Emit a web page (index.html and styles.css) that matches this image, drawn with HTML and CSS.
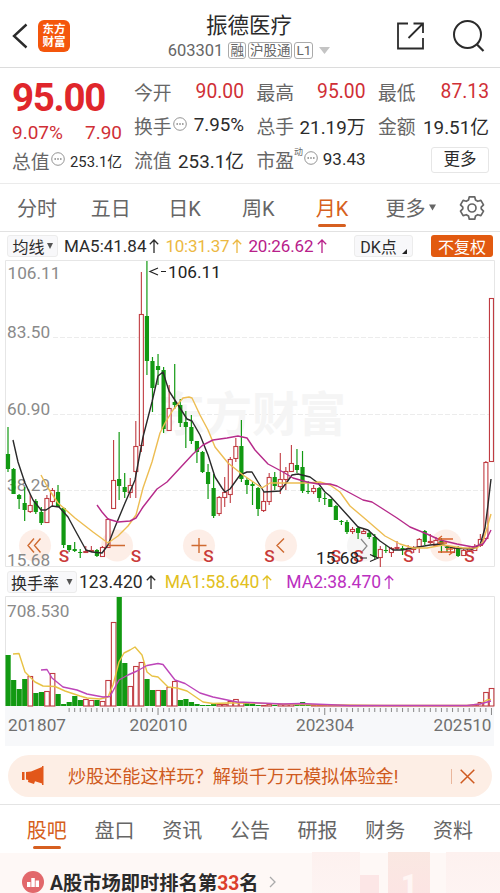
FILE: index.html
```html
<!DOCTYPE html>
<html lang="zh-CN">
<head>
    <meta charset="UTF-8">
    <title>振德医疗 603301</title>
    <link rel="stylesheet" href="styles.css">
</head>
<body>
    <svg class="defs" width="0" height="0">
        <symbol id="up" viewBox="0 0 10 14"><path d="M5 14V1M.8 5.200L5 1l4.200 4.200" fill="none" stroke="currentColor" stroke-width="1.3"/></symbol>
        <symbol id="info" viewBox="0 0 14 14"><circle cx="7" cy="7" r="6.3" fill="none" stroke="#888" stroke-width=".9"/><path d="M3.5 7h1.4M6.3 7h1.4M9.1 7h1.4" stroke="#777" stroke-width="1.3"/></symbol>
    </svg>

    <header class="header">
        <svg class="back" width="16" height="26" viewBox="0 0 16 26"><path d="M14.5 1.5L2 13l12.5 11.5" fill="none" stroke="#2b2b2b" stroke-width="2.4"/></svg>
        <div class="logo"><span>东方</span><span>财富</span></div>
        <div class="title">
            <h1>振德医疗</h1>
            <div class="code">603301<i>融</i><i>沪股通</i><i>L1</i><svg width="11" height="7" viewBox="0 0 11 7"><path d="M0 0h11L5.5 7z" fill="#c4c4c4"/></svg></div>
        </div>
        <svg class="share" width="30" height="30" viewBox="0 0 30 30"><path d="M12 2.5H2v25h25V17M17.500 2.500H27v9.500M27 2.500L12.500 17" fill="none" stroke="#2b2b2b" stroke-width="1.8"/></svg>
        <svg class="search" width="34" height="34" viewBox="0 0 34 34"><circle cx="15.500" cy="15.500" r="13.500" fill="none" stroke="#2b2b2b" stroke-width="2"/><path d="M25 25.500l6.500 6.500" stroke="#2b2b2b" stroke-width="2.200"/></svg>
    </header>

    <section class="quote">
        <div class="price">
            <div class="now">95.00</div>
            <div class="change"><span>9.07%</span><span>7.90</span></div>
            <div class="cell small"><label>总值</label><svg class="info"><use href="#info"/></svg><b>253.1亿</b></div>
        </div>
        <div class="stats">
            <div class="cell"><label>今开</label><b class="red">90.00</b></div>
            <div class="cell"><label>最高</label><b class="red">95.00</b></div>
            <div class="cell"><label>最低</label><b class="red">87.13</b></div>
            <div class="cell"><label>换手</label><svg class="info"><use href="#info"/></svg><b>7.95%</b></div>
            <div class="cell"><label>总手</label><b>21.19万</b></div>
            <div class="cell"><label>金额</label><b>19.51亿</b></div>
            <div class="cell"><label>流值</label><b>253.1亿</b></div>
            <div class="cell pe"><label>市盈<sup>动</sup></label><svg class="info"><use href="#info"/></svg><b>93.43</b></div>
            <div class="more">更多</div>
        </div>
    </section>

    <nav class="periods">
        <span>分时</span><span>五日</span><span>日K</span><span>周K</span><span class="active">月K</span>
        <span class="wide">更多<svg width="7" height="7" viewBox="0 0 7 7"><path d="M0 .5h7L3.500 6.500z" fill="#666"/></svg></span>
        <svg class="gear" width="26" height="26" viewBox="0 0 26 26" fill="none" stroke="#666" stroke-width="1.700" stroke-linejoin="round"><path d="M10.300 1.800h5.400l.8 3.200 2.200 1.300 3.200-.9 2.600 4.500-2.300 2.300v1.600l2.300 2.300-2.600 4.500-3.200-.9-2.200 1.300-.8 3.200h-5.400L9.500 21l-2.200-1.300-3.200.9-2.600-4.500 2.300-2.300v-1.600L1.500 9.900l2.600-4.500 3.200.9L9.500 5z"/><circle cx="13" cy="13" r="4"/></svg>
    </nav>

    <div class="legend">
        <span class="chip">均线<svg width="6" height="6" viewBox="0 0 7 7"><path d="M0 0h7L3.500 7z" fill="#555"/></svg></span>
        <span class="ma">MA5:41.84<svg class="up"><use href="#up"/></svg></span>
        <span class="ma yellow">10:31.37<svg class="up"><use href="#up"/></svg></span>
        <span class="ma magenta">20:26.62<svg class="up"><use href="#up"/></svg></span>
        <span class="chip dk">DK点<svg width="5" height="5" viewBox="0 0 5 5"><path d="M5 0v5H0z" fill="#222"/></svg></span>
        <span class="chip fq">不复权</span>
    </div>

    <svg class="kline" id="kline" width="500" height="307" viewBox="0 260 500 307"></svg>

    <div class="legend turnover">
        <span class="chip">换手率<svg width="7" height="6" viewBox="0 0 7 7"><path d="M0 0h7L3.500 7z" fill="#555"/></svg></span>
        <span class="ma">123.420<svg class="up"><use href="#up"/></svg></span>
        <span class="ma gold">MA1:58.640<svg class="up"><use href="#up"/></svg></span>
        <span class="ma purple">MA2:38.470<svg class="up"><use href="#up"/></svg></span>
    </div>

    <svg class="volume" id="volume" width="500" height="150" viewBox="0 596 500 150"></svg>

    <div class="banner">
        <svg width="22" height="20" viewBox="0 0 22 20" fill="#e2571a"><path d="M0 6h2.500v8H0zM4 6l5-.5L20 1V0h1.500v19H20v-1.500l-7-2.300L12 18l-6-2 .3-2L4 13.500z"/></svg>
        <p>炒股还能这样玩？解锁千万元模拟体验金!</p>
        <svg class="close" width="15" height="15" viewBox="0 0 15 15"><path d="M.7.700l13.600 13.600M14.300.700L.7 14.300" stroke="#cf5a20" stroke-width="1.500"/></svg>
    </div>

    <nav class="sections">
        <span class="active">股吧</span><span>盘口</span><span>资讯</span><span>公告</span><span>研报</span><span>财务</span><span>资料</span>
    </nav>

    <div class="rank">
        <svg width="22" height="22" viewBox="0 0 22 22"><circle cx="11" cy="11" r="11" fill="#e2686b"/><path d="M5 16v-5h3.500v5zM9.300 16V7h3.500v9zM13.600 16V9.500H17V16z" fill="#fff"/></svg>
        <p>A股市场即时排名第<em>33</em>名</p>
        <svg class="arrow" width="7" height="12" viewBox="0 0 7 12"><path d="M1 1l5 5-5 5" fill="none" stroke="#aaa" stroke-width="1.300"/></svg>
        <div class="podium"><i></i><i></i><i>1</i><i></i></div>
    </div>

    <script src="chart.js"></script>
</body>
</html>
```

FILE: styles.css
```css
* {
    box-sizing: border-box;
}

body {
    margin: 0;
    width: 500px;
    height: 893px;
    overflow: hidden;
    background: #fff;
    color: #2b2b2b;
    font-family: Roboto, "Noto Sans CJK SC", sans-serif;
}

svg {
    display: block;
    flex: none;
}

.defs {
    position: absolute;
}

h1, p {
    margin: 0;
}

i, em {
    font-style: normal;
}

/* header */
.header {
    display: flex;
    align-items: center;
    height: 68px;
    padding: 5px 14px 0 12px;
    border-bottom: 1px solid #dcdcdc;
}

.logo {
    display: flex;
    flex-direction: column;
    justify-content: center;
    width: 32px;
    height: 32px;
    margin-left: 10px;
    border-radius: 6px;
    background: #f4560c;
    color: #fff;
    font-size: 11.5px;
    font-weight: 700;
    line-height: 13px;
    text-align: center;
}

.title {
    width: 180px;
    margin: 0 auto 0 89px;
    text-align: center;
}

.title h1 {
    font-size: 21.5px;
    font-weight: 400;
    line-height: 29px;
}

.code {
    display: flex;
    align-items: center;
    justify-content: center;
    height: 22px;
    gap: 2px;
    color: #666;
    font-size: 16.5px;
    white-space: nowrap;
}

.code i {
    border: 1px solid #aaa;
    border-radius: 3px;
    padding: 0 1px;
    font-size: 13.5px;
    line-height: 15px;
}

.code i:first-of-type {
    margin-left: 3px;
}

.code svg {
    margin-left: 4px;
}

.share {
    margin-right: 26px;
}

/* quote */
.quote {
    display: flex;
    height: 116px;
    padding: 7px 11px 0 12px;
    border-bottom: 1px solid #ebebeb;
}

.price {
    width: 110px;
    margin-right: 12px;
}

.now {
    height: 46px;
    color: #e0262b;
    font-size: 38.5px;
    font-weight: 700;
    line-height: 46px;
    letter-spacing: -1.3px;
}

.change {
    display: flex;
    justify-content: space-between;
    height: 22px;
    color: #d02f36;
    font-size: 19px;
    line-height: 23px;
}

.cell {
    display: flex;
    align-items: center;
    height: 34px;
}

.cell label {
    color: #666;
    font-size: 18.8px;
    white-space: nowrap;
}

.cell b {
    margin-left: auto;
    font-size: 18.8px;
    font-weight: 400;
    white-space: nowrap;
}

.cell .red {
    color: #d02f36;
    font-size: 19.3px;
}

.cell.small b {
    font-size: 14.8px;
}

.info {
    width: 14px;
    height: 14px;
    margin: -3px 0 0 1px;
}

.stats {
    flex: 1;
    display: grid;
    grid-template-columns: 110px 109px 111px;
    grid-auto-rows: 34px;
    column-gap: 12.5px;
}

.stats .cell {
    position: relative;
    top: -1px;
}

.pe sup {
    font-size: 9px;
    vertical-align: 13px;
    line-height: 0;
}

.pe b {
    font-size: 17px;
}

.more {
    align-self: center;
    justify-self: end;
    width: 58px;
    height: 26px;
    border: 1px solid #e6e6e6;
    border-radius: 3px;
    font-size: 16.5px;
    line-height: 23px;
    text-align: center;
}

/* period tabs */
.periods {
    display: flex;
    height: 48px;
    padding-right: 1px;
    border-bottom: 1px solid #e2e2e2;
    color: #666;
    font-size: 20px;
}

.periods span {
    display: flex;
    align-items: center;
    justify-content: center;
    width: 73.8px;
}

.periods .wide {
    width: 84px;
    gap: 4px;
}

.periods .active, .sections .active {
    position: relative;
    color: #d65f20;
}

.periods .active::after, .sections .active::after {
    content: "";
    position: absolute;
    left: 50%;
    bottom: 4px;
    width: 28px;
    height: 3px;
    margin-left: -14px;
    border-radius: 2px;
    background: #d65f20;
}

.gear {
    margin: 11px 0 0 6px;
}

/* indicator rows */
.legend {
    display: flex;
    align-items: center;
    height: 28px;
    padding: 0 7px;
    font-size: 17px;
    white-space: nowrap;
}

.chip {
    display: flex;
    align-items: center;
    justify-content: center;
    gap: 2px;
    width: 51px;
    height: 22px;
    border: 1px solid #ececec;
    border-radius: 3px;
    background: #f8f8fa;
    font-size: 16px;
}

.ma {
    display: flex;
    align-items: center;
    gap: 3px;
    margin-left: 6px;
}

.up {
    width: 10px;
    height: 14px;
}

.yellow { color: #ecb842; letter-spacing: -0.25px; }
.magenta { color: #b8208a; letter-spacing: -0.1px; }
.gold { color: #e2c020; }
.purple { color: #bb30c0; }

.dk {
    width: 59px;
    margin-left: auto;
    gap: 5px;
}

.dk svg {
    margin-top: 10px;
}

.fq {
    width: 62px;
    margin-left: 18px;
    border: none;
    background: #e25a10;
    color: #fff;
}

.turnover {
    height: 29px;
    font-size: 17.5px;
}

.turnover .chip {
    width: 70px;
    gap: 7px;
}

.turnover .ma {
    margin-left: 12px;
}

.turnover .chip + .ma {
    margin-left: 2px;
    margin-right: -3px;
}

.turnover .purple {
    margin-left: 14px;
}

/* charts */
.kline text, .volume text {
    font-size: 17.2px;
}

.kline .watermark {
    font-size: 47px;
    font-weight: 700;
    fill: #f5f5f5;
}

.label { fill: #8a8a8a; }
.date { fill: #707070; }
.mark { fill: #c93a3a; font-weight: 500; }
.extreme { fill: #222; }

/* banner */
.banner {
    display: flex;
    align-items: center;
    height: 42px;
    margin: 9px 8px 7px;
    padding: 0 17px 0 14px;
    border-radius: 21px;
    background: #fdeee5;
    color: #cf5a20;
    font-size: 18.1px;
}

.banner p {
    margin: -2px auto 0 24px;
    white-space: nowrap;
}

.close {
    box-sizing: content-box;
    padding-left: 8px;
    border-left: 1px solid #e9b69c;
}

/* bottom tabs */
.sections {
    display: flex;
    height: 49px;
    padding: 0 13px;
    border-top: 1px solid #e4e4e4;
    color: #666;
    font-size: 20px;
}

.sections span {
    display: flex;
    align-items: center;
    justify-content: center;
    width: 67.7px;
    padding-top: 1px;
}

.rank {
    display: flex;
    align-items: center;
    height: 60px;
    padding: 0 0 2px 22px;
    background: #fef8f6;
}

.rank p {
    margin-left: 6px;
    font-size: 19.3px;
    font-weight: 700;
    white-space: nowrap;
}

.rank em {
    color: #dc3f2c;
}

.arrow {
    margin-left: 10px;
}

.podium {
    display: flex;
    align-items: flex-end;
    height: 60px;
    margin-left: auto;
}

.podium i {
    width: 48px;
    height: 60px;
    background: linear-gradient(#fdf1ef, #fef5f4);
}

.podium i:nth-child(2) {
    width: 19px;
    height: 37px;
    margin-right: 9px;
    background: #fce6e6;
}

.podium i:nth-child(3) {
    width: 42px;
    margin-right: 16px;
    background: linear-gradient(#fae8e2, #fde3e4);
    color: #fff6f4;
    font-size: 28px;
    font-weight: 900;
    line-height: 66px;
    text-align: center;
}

.podium i:nth-child(4) {
    width: 54px;
}
```

FILE: chart.js
```js
const START = 8;
const STEP = 5.557;
const GREEN = '#129912';
const RED = '#c03c42';

// colour, high, body top, body bottom, low (one row per month)
const candles = `
g 427 454 469 472|g 468 469 494 494|g 494 495 499 509|g 487 503 510 521|r 494 505 511 513
g 499 501 512 514|g 507 512 523 525|r 495 498 522 522|r 488 490 501 506|g 485 492 507 507
g 507 508 545 548|g 545 545 550 552|g 542 549 551 552|g 549 552 553 558|r 546 551 552 553
r 546 550 551 552|g 549 550 556 557|r 546 547 556 557|r 518 519 547 548|r 440 480 508 508
g 432 479 486 500|g 473 487 492 498|r 478 485 492 498|r 421 446 471 498|r 272 314 445 452
g 261 316 361 375|g 357 361 388 412|g 354 366 370 385|g 367 370 429 433|r 385 408 430 430
g 364 402 405 409|g 399 405 423 427|g 411 422 427 448|g 415 427 441 444|g 441 441 452 463
g 451 452 472 473|g 464 472 484 499|g 474 488 516 518|r 496 497 513 516|r 477 492 497 507
r 457 459 494 503|r 438 446 458 462|g 420 446 479 482|g 478 480 485 494|g 482 484 486 505
g 487 488 509 516|r 492 501 510 512|r 473 477 501 505|g 472 477 486 490|r 453 479 486 494
r 467 471 479 490|r 445 463 471 471|g 449 465 470 473|g 451 467 491 493|g 481 491 492 494
r 485 488 491 494|g 487 488 498 502|g 493 498 499 505|g 499 499 507 507|g 505 506 520 520
g 520 521 522 525|g 520 522 532 534|r 527 529 531 534|g 526 528 533 539|r 528 531 533 534
g 530 533 537 539|g 534 537 557 559|r 546 549 557 567|g 545 550 551 553|r 547 548 552 557
r 541 547 548 550|g 546 548 550 555|r 545 548 550 551|r 546 547 549 553|r 538 539 546 553
g 530 531 542 545|r 534 541 542 544|r 537 540 545 545|g 538 541 545 553|g 546 547 548 552
r 547 547 552 553|g 546 548 556 557|r 549 550 555 556|r 547 548 551 552|r 544 546 550 551
r 534 539 545 547|r 461 462 538 538|r 298 298 461 461`.trim().split(/[|\n]/).map(s => s.split(' '));

const averages = [
    ['#2a2a2a', '13,440 18,462 25,483 33,500 41,510 46,510 52,506 59,507 68,517 75,530 86,550 92,552 102,553 108,545 115,527 125,503 135,480 143,437 152,402 158,376 163,372 169,391 180,408 187,419 192,421 200,435 208,455 215,477 222,488 225,492 230,489 240,475 247,472 252,472 258,482 264,492 280,491 287,482 292,475 298,474 310,477 318,483 325,492 330,496 340,507 350,518 358,527 368,530 380,541 393,550 402,550 413,548 430,545 440,544 453,548 472,549 480,545 485,528 488,505 491,479'],
    ['#edbd52', '41,475 48,488 58,503 75,518 93,532 108,543 118,536 128,526 136,515 143,488 152,462 160,433 165,423 173,410 183,398 189,397 192,398 200,415 208,430 215,447 228,463 243,475 262,488 270,483 287,483 307,483 320,482 330,485 340,492 350,506 363,517 385,536 400,544 413,548 427,548 443,545 463,548 477,548 483,542 487,528 491,514'],
    ['#b62a8a', '97,505 102,512 108,519 118,522 130,521 136,518 143,507 157,489 167,482 180,468 193,454 203,445 213,440 227,438 238,436 247,438 255,450 268,464 283,472 293,478 307,482 318,484 330,484 337,486 350,493 363,500 372,502 383,509 397,518 410,527 427,534 440,540 457,544 473,547 483,544 487,538 491,530']
];

const n = candles.length;
const x = i => START + STEP * i;
const line = (color, points) => `<polyline points="${points}" fill="none" stroke="${color}" stroke-width="1.4" stroke-linejoin="round"/>`;
const text = (cls, tx, ty, s, extra = '') => `<text class="${cls}" x="${tx}" y="${ty}" ${extra}>${s}</text>`;

function drawKline() {
    let out = '<path d="M5.500 566.500V260.500H494.500V566.500z" fill="none" stroke="#e6e6e6"/>';
    out += '<path d="M53 337.500H494M53 414.500H494M53 490.500H494" stroke="#ececec" stroke-dasharray="5 2"/>';
    out += text('watermark', 158, 431, '东方财富');

    // tool buttons lie below the candles
    [35, 117, 199, 281, 363, 446].forEach((cx, i) => {
        out += `<circle cx="${cx}" cy="545.500" r="16" fill="${i === 4 ? '#f6f6f6' : '#fdeee7'}"/>`;
    });
    out += text('label', 7.500, 279, '106.11') + text('label', 7, 338, '83.50') + text('label', 7, 415, '60.90')
        + text('label', 7, 491, '38.29') + text('label', 7, 566, '15.68');

    candles.forEach(([c, high, top, bottom, low], i) => {
        const cx = x(i);
        const h = Math.max(bottom - top, 1);
        if (c === 'g') {
            out += `<path d="M${cx} ${high}V${low}" stroke="${GREEN}" stroke-width="1.2"/>`;
            out += `<rect x="${cx - 2.1}" y="${top}" width="4.2" height="${h}" fill="${GREEN}"/>`;
        } else {
            out += `<path d="M${cx} ${high}V${top}M${cx} ${bottom}V${low}" stroke="${RED}" stroke-width="1.1"/>`;
            out += `<rect x="${cx - 2}" y="${+top + .5}" width="4" height="${h}" fill="#fff" stroke="${RED}" stroke-width="1.1"/>`;
        }
    });
    averages.forEach(([color, points]) => out += line(color, points));

    out += '<path d="M34 538.500l-6 7 6 7M40.500 538.500l-6 7 6 7M108 545.500h17M191.500 545.500h15M199 538v15M284 538.500l-7 7 7 7" fill="none" stroke="#cf6a30" stroke-width="1.400"/>';
    out += '<path d="M361 539l6 7-6 7" fill="none" stroke="#888" stroke-width="1.200"/>';
    out += '<path d="M438 539h15M438 539l4-3M438 543h9M446 549h7M438 552h15l-4 3" fill="none" stroke="#d9602a" stroke-width="1.300"/>';
    [64, 136, 208.500, 269.500, 336, 358.500, 408.500, 469.500].forEach(sx => out += text('mark', sx, 561.500, 'S', 'text-anchor="middle"'));
    out += text('extreme', 168, 278, '106.11') + text('extreme', 316, 563.500, '15.68');
    out += '<path d="M158 268l-8 3.500 8 3.500M161 271.500h5M360 558h7M370 554.500l8 3.500-8 3.500" fill="none" stroke="#222" stroke-width="1.200"/>';
    document.getElementById('kline').innerHTML = out;
}

// bar tops, g = green, r = red
const bars = 'g655 g680 g689 g679 r676 g693 g692 r691 r673 g694 g704 g702 g696 g700 r699 r700 g700 r701 r680 r622 g597 g663 r686 r666 r662 g679 g690 r690 g690 r687 r681 g700 g699 g702 g704 g705 g705 g703 r704 r704 r701 r699 r702 g703 g704 g705 r705 r704 g705 r704 r704 r704 g703 g702 g704 r705'.split(' ');
while (bars.length < n - 3) bars.push('r705');
bars.push('r702', 'r692', 'r688');

function drawVolume() {
    let out = '<rect x="5" y="706" width="489" height="40" fill="#f7f8fa"/>';
    out += '<path d="M5.500 706V596.500H494.500V706" fill="none" stroke="#e4e4e4"/>';
    out += text('label', 7, 617, '708.530');
    bars.forEach((b, i) => {
        const top = +b.slice(1);
        if (b[0] === 'g') {
            out += `<rect x="${x(i) - 2.5}" y="${top}" width="5.2" height="${706 - top}" fill="${GREEN}"/>`;
        } else {
            out += `<rect x="${x(i) - 2.2}" y="${top + .5}" width="4.6" height="${706 - top - .5}" fill="#fff" stroke="${RED}" stroke-width="1.1"/>`;
        }
    });
    out += line('#e8c244', '13,654 19,653.500 25,672 30,677 35,682 43,686 55,686.500 65,691 80,696 87,698 100,699 108,697 113,685 119,662 124,653 130,650 135,647 142,655 147,672 152,676 158,677 168,687 177,688 187,691 203,702 213,703.500 227,703 250,703 300,704.500 383,705.500 467,705.500 480,704 487,700 491,699.500');
    out += line('#bd45b9', '41,670 47,669.500 52,678 63,687 77,690 87,694 103,697 110,696.500 119,680 128,675 137,671 147,665.500 158,663.500 163,664.500 175,680 185,683.500 200,693 213,697 237,702 250,702.500 283,704 300,703.500 350,705.500 467,705.500 480,704 491,701');
    for (let i = 11; i < n; i++) {
        const major = i === 27 || i === 57 || i === n - 1;
        out += `<path d="M${x(i)} 708v${major ? 7 : 4}" stroke="#888" stroke-width="1"/>`;
    }
    [[8, '201807'], [129.500, '202010'], [296, '202304'], [433.500, '202510']].forEach(([tx, s]) => out += text('date', tx, 730.500, s));
    document.getElementById('volume').innerHTML = out;
}

drawKline();
drawVolume();
```
